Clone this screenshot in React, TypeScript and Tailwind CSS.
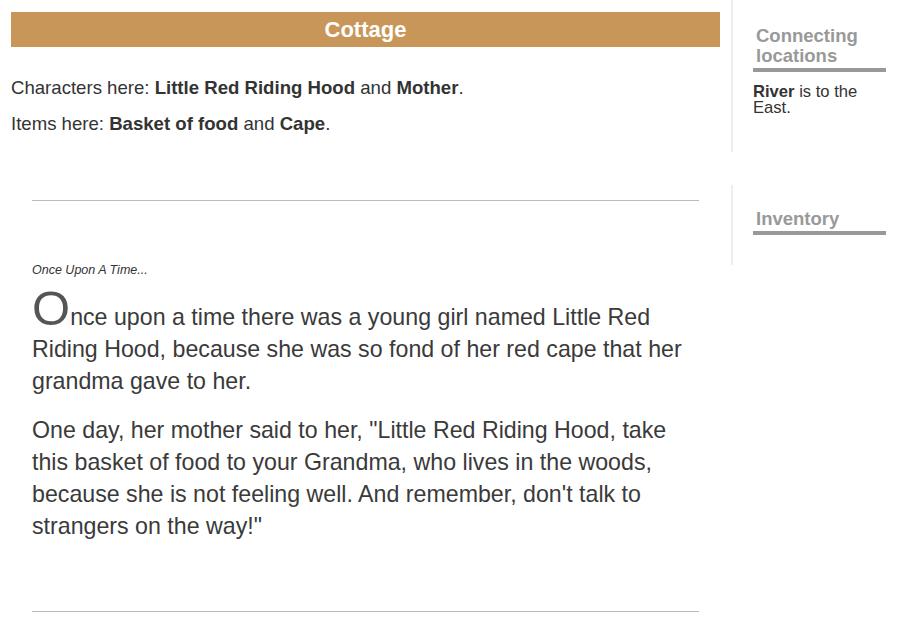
export default function App() {
  const font = { fontFamily: '"Liberation Sans", Arial, Helvetica, sans-serif' };
  return (
    <div className="flex min-h-[633px] bg-white text-[#333]" style={font}>
      <main className="w-[731px] shrink-0 px-[11px] pt-[12px]">
        <h1 className="h-[35px] bg-[#c9965a] text-center text-[22px] font-bold leading-[35px] text-white">
          Cottage
        </h1>
        <div className="mt-[29px] text-[18.6px] leading-[24px]">
          <p>
            Characters here: <b>Little Red Riding Hood</b> and <b>Mother</b>.
          </p>
          <p className="mt-[12px]">
            Items here: <b>Basket of food</b> and <b>Cape</b>.
          </p>
        </div>
        <section className="mt-[64px] px-[21px]">
          <hr className="border-t border-[#bbb]" />
          <p className="mt-[62px] text-[12.5px] italic leading-[14px]">Once Upon A Time...</p>
          <div className="mt-[24px] text-[23.2px] leading-[32px] text-[#3a3a3a]">
            <p>
              <span className="text-[49px] leading-[0] text-[#555]">O</span>nce upon a time there was a
              young girl named Little Red Riding Hood, because she was so fond of her red cape that
              her grandma gave to her.
            </p>
            <p className="mt-[17px]">
              One day, her mother said to her, "Little Red Riding Hood, take this basket of food to
              your Grandma, who lives in the woods, because she is not feeling well. And remember,
              don't talk to strangers on the way!"
            </p>
          </div>
          <hr className="mt-[69px] border-t border-[#bbb]" />
        </section>
      </main>
      <aside className="flex-1">
        <div className="h-[152px] border-l-2 border-[#eee] pl-[20px] pr-[14px] pt-[26px]">
          <h2 className="border-b-4 border-[#999] pb-[2px] pl-[3px] text-[18.5px] font-bold leading-[20px] text-[#999]">
            Connecting locations
          </h2>
          <p className="mt-[12px] text-[16.6px] leading-[16px]">
            <b>River</b> is to the East.
          </p>
        </div>
        <div className="mt-[33px] h-[80px] border-l-2 border-[#eee] pl-[20px] pr-[14px] pt-[24px]">
          <h2 className="border-b-4 border-[#999] pb-[2px] pl-[3px] text-[18.5px] font-bold leading-[20px] text-[#999]">
            Inventory
          </h2>
        </div>
      </aside>
    </div>
  );
}
